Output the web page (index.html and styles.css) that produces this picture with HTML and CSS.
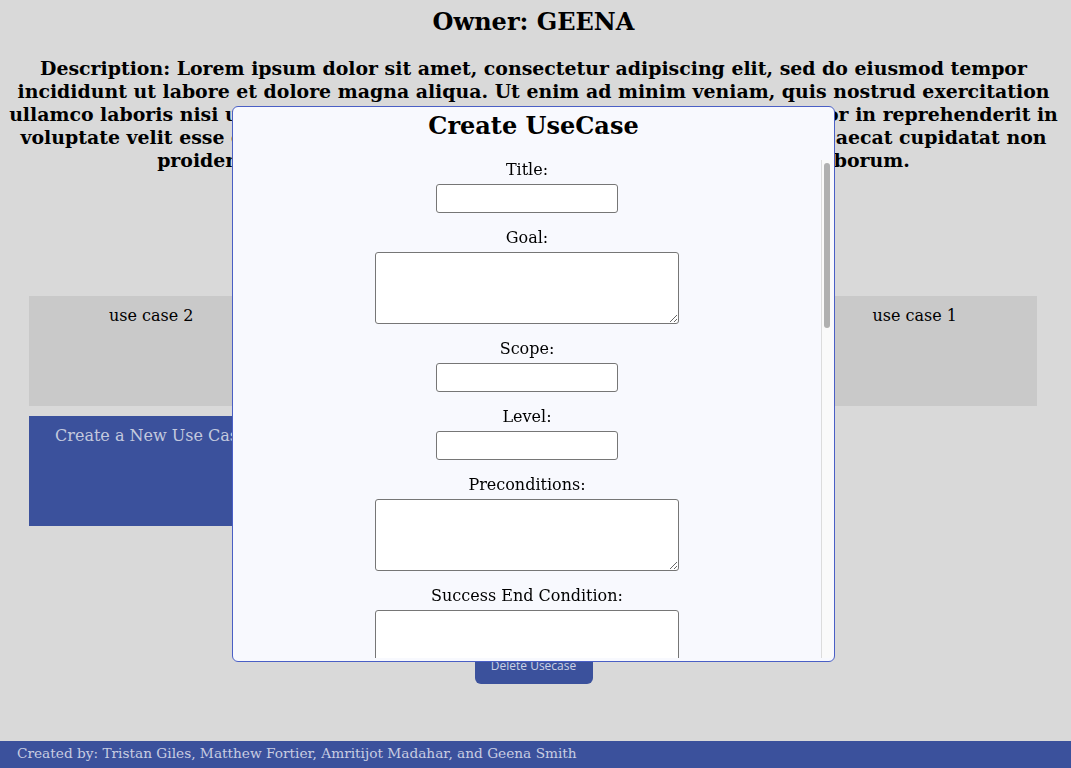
FILE: index.html
```html
<!DOCTYPE html>
<html>
<head>
<meta charset="utf-8">
<link rel="stylesheet" href="styles.css">
</head>
<body>
<div class="page">
  <main class="main">
    <h2 class="owner">Owner: GEENA</h2>
    <h3 class="desc">Description: Lorem ipsum dolor sit amet, consectetur adipiscing elit, sed do eiusmod tempor incididunt ut labore et dolore magna aliqua. Ut enim ad minim veniam, quis nostrud exercitation ullamco laboris nisi ut aliquip ex ea commodo consequat. Duis aute irure dolor in reprehenderit in voluptate velit esse cillum dolore eu fugiat nulla pariatur. Excepteur sint occaecat cupidatat non proident, sunt in culpa qui officia deserunt mollit anim id est laborum.</h3>
    <div class="grid">
      <div class="card">use case 2</div>
      <div class="card">use case 4</div>
      <div class="card">use case 3</div>
      <div class="card">use case 1</div>
      <div class="card card-new">Create a New Use Case</div>
    </div>
    <div class="actions">
      <button class="delete">Delete Usecase</button>
    </div>
  </main>
  <footer class="footer">Created by: Tristan Giles, Matthew Fortier, Amritijot Madahar, and Geena Smith</footer>
</div>

<div class="modal">
  <h2 class="modal-title">Create UseCase</h2>
  <div class="modal-body">
    <form class="form">
      <label class="lbl">Title:</label>
      <input class="inp" type="text">
      <label class="lbl">Goal:</label>
      <textarea class="ta"></textarea>
      <label class="lbl">Scope:</label>
      <input class="inp" type="text">
      <label class="lbl">Level:</label>
      <input class="inp" type="text">
      <label class="lbl">Preconditions:</label>
      <textarea class="ta"></textarea>
      <label class="lbl">Success End Condition:</label>
      <textarea class="ta"></textarea>
      <label class="lbl">Failed End Condition:</label>
      <textarea class="ta"></textarea>
      <label class="lbl">Primary Actor:</label>
      <input class="inp" type="text">
      <label class="lbl">Secondary Actors:</label>
      <input class="inp" type="text">
      <label class="lbl">Trigger:</label>
      <input class="inp" type="text">
      <label class="lbl">Description:</label>
      <textarea class="ta"></textarea>
      <label class="lbl">Extensions:</label>
      <textarea class="ta"></textarea>
      <label class="lbl">Sub-Variations:</label>
      <textarea class="ta"></textarea>
      <label class="lbl">Related Information:</label>
      <textarea class="ta"></textarea>
      <label class="lbl">Priority:</label>
      <input class="inp" type="text">
      <label class="lbl">Frequency:</label>
      <input class="inp" type="text">
      <button class="submit" type="button">Submit</button>
    </form>
  </div>
  <div class="scrollbar"><div class="thumb"></div></div>
</div>
</body>
</html>
```

FILE: styles.css
```css
html, body {
  margin: 0;
  padding: 0;
}
body {
  background: #d9d9d9;
  font-family: "DejaVu Serif", serif;
  color: #000;
  height: 768px;
  overflow: hidden;
}
.page {
  display: flex;
  flex-direction: column;
  height: 768px;
}
.main {
  flex: 1;
  padding: 0 4px 0 0;
}
.owner {
  font-size: 24px;
  text-align: center;
  margin: 8px 0 0 0;
  line-height: 28px;
}
.desc {
  font-size: 18.9px;
  text-align: center;
  margin: 21px 4px 0 4px;
  line-height: 23px;
}
.grid {
  display: grid;
  width: 1008px;
  grid-template-columns: repeat(4, 1fr);
  gap: 10px;
  margin: 124px 0 0 29px;
}
.card {
  height: 110px;
  background: #c9c9c9;
  text-align: center;
  font-size: 16px;
  padding-top: 10px;
  box-sizing: border-box;
}
.card-new {
  background: #3b519c;
  color: #c3c9de;
}
.actions {
  display: flex;
  justify-content: center;
  margin-top: 129px;
}
.delete {
  width: 118px;
  height: 29px;
  background: #3b519c;
  color: #ccd2e6;
  border: none;
  border-radius: 6px;
  font-family: "Open Sans", sans-serif;
  font-size: 12px;
  padding: 0 0 9px 0;
}
.footer {
  height: 27px;
  background: #3b519c;
  color: #c8cde2;
  font-size: 13.7px;
  padding: 4px 0 0 17px;
  box-sizing: border-box;
}
.modal {
  position: fixed;
  left: 232px;
  top: 106px;
  width: 603px;
  height: 556px;
  box-sizing: border-box;
  background: #f8f9fe;
  border: 1px solid #4a5fc5;
  border-radius: 6px;
  padding: 0 2px 3px 1px;
  display: flex;
  flex-direction: column;
}
.modal-title {
  font-size: 24px;
  line-height: 28px;
  text-align: center;
  margin: 5px 0 0 1px;
  height: 48px;
}
.modal-body {
  flex: 1;
  overflow: hidden;
  padding-right: 12px;
}
.scrollbar {
  position: absolute;
  right: 2px;
  top: 53px;
  bottom: 3px;
  width: 11px;
  box-sizing: border-box;
  background: #fafafa;
  border-left: 1px solid #dcdcdc;
}
.thumb {
  position: absolute;
  left: 2px;
  top: 3px;
  width: 6px;
  height: 165px;
  border-radius: 3px;
  background: #b0b0b0;
}
.form {
  display: flex;
  flex-direction: column;
  align-items: center;
  padding-top: 1px;
}
.lbl {
  font-size: 16px;
  line-height: 18px;
  margin-bottom: 5px;
}
.inp {
  width: 182px;
  height: 29px;
  box-sizing: border-box;
  border: 1px solid #767676;
  border-radius: 3px;
  background: #fff;
  margin: 0 0 16px 0;
}
.ta {
  width: 304px;
  height: 72px;
  box-sizing: border-box;
  border: 1px solid #767676;
  border-radius: 3px;
  background: #fff;
  margin: 0 0 16px 0;
}
.submit {
  margin: 10px 0 20px 0;
  background: #3b519c;
  color: #ccd2e6;
  border: none;
  border-radius: 6px;
  font-family: "Open Sans", sans-serif;
  font-size: 12px;
  padding: 6px 20px;
}
```
